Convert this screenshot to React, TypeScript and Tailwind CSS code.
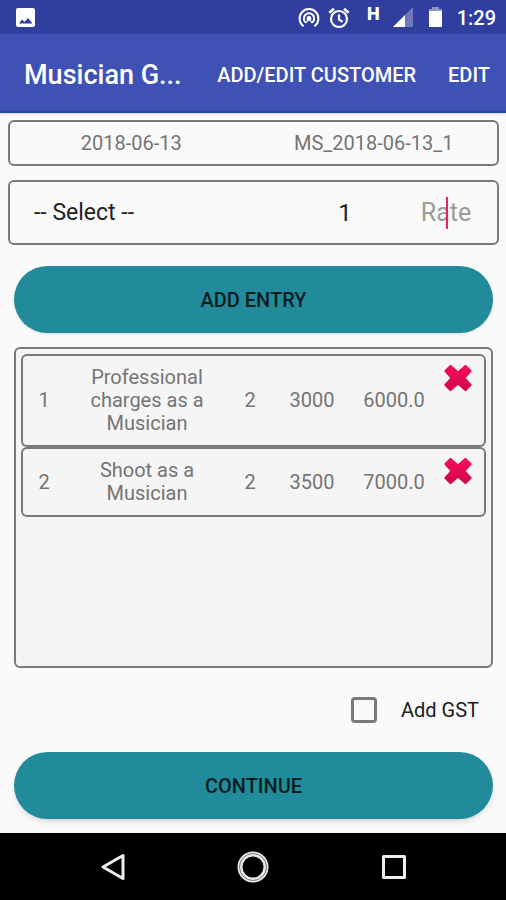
import { useState } from "react";

const initialEntries = [
  { id: 1, name: "Professional charges as a Musician", qty: 2, rate: "3000", total: "6000.0" },
  { id: 2, name: "Shoot as a Musician", qty: 2, rate: "3500", total: "7000.0" },
];

function StatusBar() {
  return (
    <div className="flex h-[34px] items-center bg-[#303f9f] pt-px pr-2.5 pl-4 text-white">
      <svg className="h-5 w-5" viewBox="0 0 20 20">
        <rect x="0" y="0" width="19" height="19" rx="2" fill="#fff" />
        <path d="M3 15.5L6 11.5L8.500 14L12 10L16.500 15.5Z" fill="#303f9f" />
      </svg>
      <div className="ml-auto flex items-center">
        <svg className="h-[22px] w-[22px]" viewBox="0 0 22 22" fill="none" stroke="#fff" strokeWidth="2">
          <circle cx="11" cy="11.500" r="2.400" fill="#fff" stroke="none" />
          <path d="M7.800 15.600A5.200 5.200 0 1 1 14.200 15.600" />
          <path d="M5.600 19.200A9.400 9.400 0 1 1 16.400 19.200" />
          <path d="M8 16L10 13M14 16L12 13" strokeWidth="1.200" />
        </svg>
        <svg className="ml-2 h-[22px] w-[22px]" viewBox="0 0 22 22" fill="none" stroke="#fff" strokeWidth="2.200">
          <circle cx="11" cy="12" r="8" />
          <path d="M11 7.500V12.500L14.500 14.800" />
          <path d="M1.300 5.800L6 1.800M20.700 5.800L16 1.800" strokeWidth="2.600" />
        </svg>
        <span className="ml-[17px] pb-2 text-lg leading-4 font-black">H</span>
        <svg className="ml-3 h-[21px] w-[22px]" viewBox="0 0 22 21">
          <path d="M21 0V20H1Z" fill="#6d78ba" />
          <path d="M13 8V20H1Z" fill="#fff" />
        </svg>
        <svg className="ml-3.5 h-[21px] w-[15px]" viewBox="0 0 15 21">
          <path d="M4 0H11V2H14V5H1V2H4Z" fill="#8f98cb" />
          <rect x="1" y="4" width="13" height="16" fill="#fff" />
        </svg>
        <span className="ml-3.5 text-xl leading-6 font-medium">1:29</span>
      </div>
    </div>
  );
}

function AppBar() {
  return (
    <header className="z-10 flex h-[79px] items-center border-b-2 border-[#2443ac] bg-[#3f51b5] pt-1 pr-4 pl-6 text-white shadow-sm">
      <h1 className="min-w-0 flex-1 truncate text-[27px] leading-8 font-medium">Musician G...</h1>
      <button className="ml-8 shrink-0 text-xl font-medium">ADD/EDIT CUSTOMER</button>
      <button className="ml-8 shrink-0 text-xl font-medium">EDIT</button>
    </header>
  );
}

function RemoveIcon() {
  return (
    <svg className="h-7 w-7" viewBox="0 0 28 28">
      <defs>
        <linearGradient id="cross" x1="0" y1="0" x2="0" y2="1">
          <stop offset="0" stopColor="#f50c58" />
          <stop offset="1" stopColor="#d00850" />
        </linearGradient>
      </defs>
      <path
        d="M6.500 1.500L14 8L21.500 1.500L27 7L20.800 14L27 21L21.500 26.500L14 20L6.500 26.500L1 21L7.200 14L1 7Z"
        fill="url(#cross)"
        stroke="url(#cross)"
        strokeWidth="1.500"
        strokeLinejoin="round"
      />
    </svg>
  );
}

function NavBar() {
  return (
    <nav className="flex h-[67px] items-center justify-center gap-[108px] bg-black">
      <button aria-label="Back">
        <svg className="h-8 w-8" viewBox="0 0 32 32" fill="none" stroke="#eee" strokeWidth="3" strokeLinejoin="round">
          <path d="M6 16L26 4.500V27.500Z" />
        </svg>
      </button>
      <button aria-label="Home">
        <svg className="h-8 w-8" viewBox="0 0 32 32" fill="none">
          <circle cx="16" cy="16" r="13" stroke="#e8e8e8" strokeWidth="5" />
          <circle cx="16" cy="16" r="13.500" stroke="#777" strokeWidth="1" />
        </svg>
      </button>
      <button aria-label="Recent apps">
        <svg className="h-8 w-8" viewBox="0 0 32 32" fill="none" stroke="#eee" strokeWidth="3" strokeLinejoin="round">
          <rect x="6.500" y="5.500" width="21" height="21" />
        </svg>
      </button>
    </nav>
  );
}

export default function App() {
  const [entries, setEntries] = useState(initialEntries);
  const [rate, setRate] = useState("");

  return (
    <div className="flex min-h-screen flex-col bg-[#fafafa] font-[Roboto,sans-serif] text-xl text-[#747474]">
      <StatusBar />
      <AppBar />
      <main className="flex flex-1 flex-col pt-[7px] pr-[7px] pb-3.5 pl-2">
        <section className="grid h-[46px] grid-cols-2 items-center rounded-md border-2 border-[#7a7a7a] pr-0.5 text-center">
          <span>2018-06-13</span>
          <span>MS_2018-06-13_1</span>
        </section>

        <section className="mt-3.5 flex h-[65px] items-center rounded-md border-2 border-[#7a7a7a] pr-1.5 pl-6 text-[#222]">
          <select aria-label="Service" className="min-w-0 flex-1 appearance-none pt-0.5 text-[23px] outline-none">
            <option>-- Select --</option>
          </select>
          <input
            aria-label="Quantity"
            defaultValue="1"
            className="w-[100px] text-center text-2xl outline-none"
          />
          <label className="relative ml-1.5 w-[90px]">
            <input
              aria-label="Rate"
              placeholder="Rate"
              value={rate}
              onChange={(e) => setRate(e.target.value)}
              className="w-full text-center text-[25px] leading-8 caret-[#e91e63] outline-none placeholder:text-[#9b9b9b]"
            />
            {!rate && <span className="absolute inset-y-0 left-1/2 w-0.5 bg-[#e0246a]" />}
          </label>
        </section>

        <div className="flex flex-1 flex-col px-1.5 pt-[21px]">
          <button className="h-[67px] shrink-0 rounded-full bg-[#218b9b] font-medium text-[#0b1c20] shadow-sm">
            ADD ENTRY
          </button>

          <section className="mt-3.5 flex-1 rounded-md border-2 border-[#7a7a7a] bg-[#f5f5f5] p-[5px]">
            <table className="w-full table-fixed border-separate border-spacing-0 text-center leading-[23px]">
              <colgroup>
                <col className="w-11" />
                <col />
                <col className="w-[42px]" />
                <col className="w-[82px]" />
                <col className="w-[82px]" />
                <col className="w-[51px]" />
              </colgroup>
              <tbody>
                {entries.map((entry) => (
                  <tr key={entry.id} className="*:border-y-2 *:border-[#7a7a7a] *:py-2.5">
                    <td className="rounded-l-md border-l-2">{entry.id}</td>
                    <td className="px-3">{entry.name}</td>
                    <td>{entry.qty}</td>
                    <td>{entry.rate}</td>
                    <td>{entry.total}</td>
                    <td className="rounded-r-md border-r-2 align-top">
                      <button
                        aria-label={`Remove ${entry.name}`}
                        className="-mt-0.5 block pl-[9px]"
                        onClick={() => setEntries(entries.filter((e) => e.id !== entry.id))}
                      >
                        <RemoveIcon />
                      </button>
                    </td>
                  </tr>
                ))}
              </tbody>
            </table>
          </section>

          <div className="flex h-[84px] shrink-0 items-center justify-end pr-3.5">
            <label className="flex items-center gap-6 text-[#1c1c1c]">
              <input
                type="checkbox"
                className="h-[26px] w-[26px] appearance-none rounded-sm border-3 border-[#7a7a7a] checked:bg-[#218b9b]"
              />
              Add GST
            </label>
          </div>

          <button className="h-[67px] shrink-0 rounded-full bg-[#218b9b] font-medium text-[#0b1c20] shadow-md">
            CONTINUE
          </button>
        </div>
      </main>
      <NavBar />
    </div>
  );
}
